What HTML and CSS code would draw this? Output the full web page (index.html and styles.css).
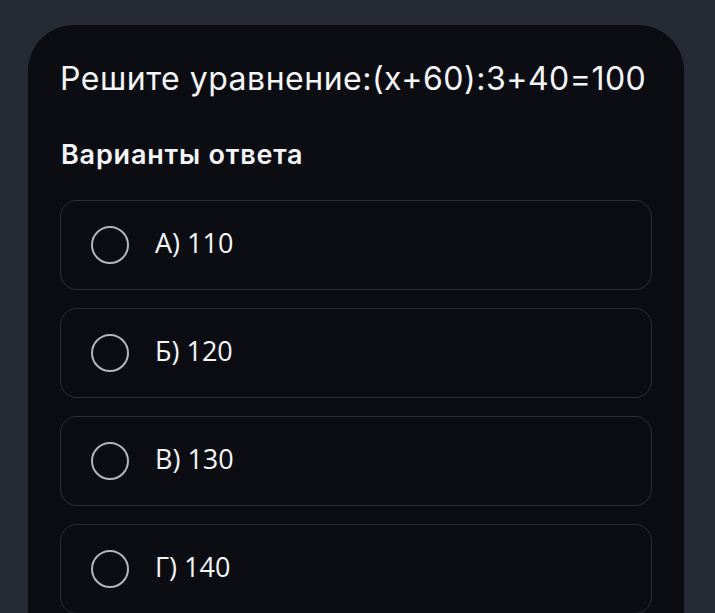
FILE: index.html
```html
<!DOCTYPE html>
<html lang="ru">
<head>
<meta charset="utf-8">
<link rel="stylesheet" href="styles.css">
</head>
<body>
<div class="card">
  <h1 class="title">Решите уравнение:(x+60):3+40=100</h1>
  <h2 class="subtitle">Варианты ответа</h2>
  <div class="options">
    <label class="option"><span class="radio"></span><span class="label">А) 110</span></label>
    <label class="option"><span class="radio"></span><span class="label">Б) 120</span></label>
    <label class="option"><span class="radio"></span><span class="label">В) 130</span></label>
    <label class="option"><span class="radio"></span><span class="label">Г) 140</span></label>
  </div>
</div>
</body>
</html>
```
FILE: styles.css
```css
html, body {
  margin: 0;
  height: 100%;
  background: #262a35;
  overflow: hidden;
}
body {
  padding: 25px 31px 0 28px;
  box-sizing: border-box;
  font-family: Inter, "Noto Sans", sans-serif;
  color: #f4f5f7;
}
.card {
  background: #0b0d12;
  border-radius: 46px 46px 0 0;
  padding: 34px 32px 40px 32px;
  min-height: 700px;
}
.title {
  margin: 0;
  font-size: 32px;
  font-weight: 400;
  line-height: 40px;
  letter-spacing: 0.5px;
}
.subtitle {
  margin: 40px 0 0 1px;
  font-size: 27px;
  font-weight: 600;
  line-height: 32px;
  letter-spacing: 0.8px;
}
.options {
  margin-top: 29px;
  display: flex;
  flex-direction: column;
  gap: 18px;
}
.option {
  display: flex;
  align-items: center;
  height: 90px;
  box-sizing: border-box;
  border: 1.5px solid #2b2f39;
  border-radius: 17px;
  padding-left: 30px;
}
.radio {
  width: 38px;
  height: 38px;
  box-sizing: border-box;
  border: 2.7px solid #b4b6bb;
  border-radius: 50%;
  flex: none;
}
.label {
  margin-left: 26px;
  margin-bottom: 4px;
  font-family: "Open Sans", "Noto Sans", sans-serif;
  font-size: 27px;
  font-weight: 500;
  line-height: 32px;
}
```
